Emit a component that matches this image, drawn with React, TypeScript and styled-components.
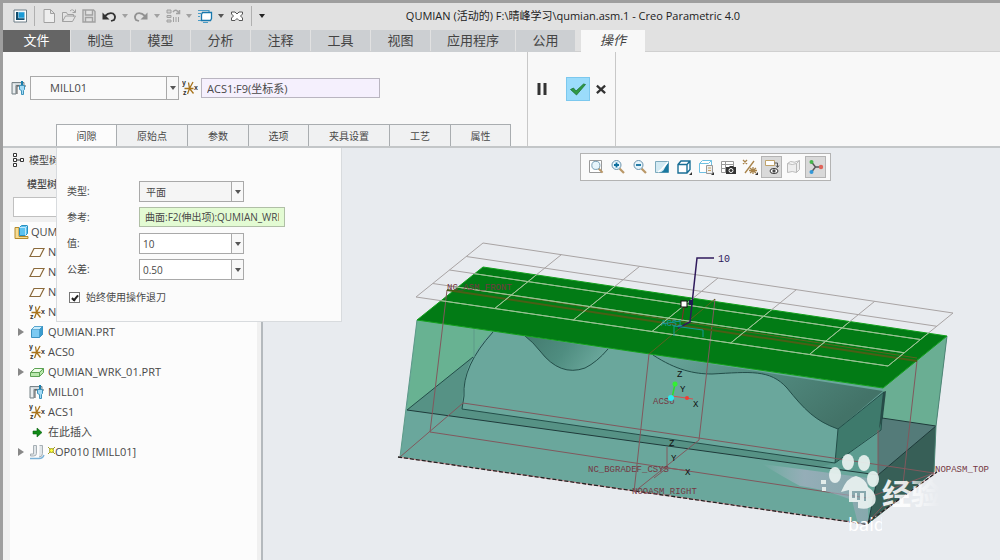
import React from "react";
import styled, { createGlobalStyle } from "styled-components";

const uiFont = `"Open Sans", "Noto Sans CJK SC", sans-serif`;

const GlobalStyle = createGlobalStyle`
  *, *::before, *::after { box-sizing: border-box; }
  body { margin: 0; background: #e8ebef; color: #484848; font: 11px/16px ${uiFont}; }
  button, input, select { font: inherit; color: inherit; margin: 0; }
  ul { list-style: none; margin: 0; padding: 0; }
  svg { display: block; flex: none; }
`;

const Window = styled.div`
  min-height: 100vh;
  display: flex;
  flex-direction: column;
  border: solid #9e9e9e;
  border-width: 3px 0 0 3px;
`;

const TitleBar = styled.header`
  height: 27px;
  display: flex;
  align-items: center;
  background: #e1e1e1;
  padding: 0 120px 2px 9px;
`;

const QuickTools = styled.div`
  display: flex;
  align-items: center;
  gap: 4px;
`;

const QuickButton = styled.button<{ $faded?: boolean }>`
  display: flex;
  align-items: center;
  padding: 0;
  border: 0;
  background: none;
  opacity: ${(p) => (p.$faded ? 0.45 : 1)};
`;

const Separator = styled.span`
  width: 1px;
  height: 20px;
  margin: 0 2px;
  background: #b0b0b0;
`;

const Title = styled.h1`
  flex: 1;
  margin: 0;
  text-align: center;
  font-size: 11px;
  font-weight: 400;
  color: #222;
  white-space: nowrap;
`;

const Ribbon = styled.nav`
  height: 22px;
  display: flex;
  gap: 1px;
  background: #e1e1e1;
  border-bottom: 1px solid #d0d0d0;
`;

const RibbonTab = styled.button<{ $kind?: "file" | "active"; $w: number }>`
  width: ${(p) => p.$w}px;
  height: 22px;
  padding: 0 0 2px;
  border: 0;
  font-size: 13px;
  line-height: 18px;
  margin-left: ${(p) => (p.$kind === "active" ? 5 : 0)}px;
  font-style: ${(p) => (p.$kind === "active" ? "italic" : "normal")};
  background: ${(p) => (p.$kind === "file" ? "#656565" : p.$kind === "active" ? "#f8f8f8" : "#cccfd2")};
  color: ${(p) => (p.$kind === "file" ? "#fff" : "#444")};
`;

const Dashboard = styled.section`
  height: 96px;
  display: flex;
  background: #f8f8f8;
  border-bottom: 2px solid #c3c6c8;
  position: relative;
  z-index: 2;
`;

const DashMain = styled.div`
  width: 525px;
  display: flex;
  flex-direction: column;
  justify-content: space-between;
  padding-top: 24px;
  border-right: 1px solid #c8c8c8;
`;

const DashFields = styled.div`
  display: flex;
  align-items: center;
  gap: 3px;
  padding-left: 8px;
`;

const Combo = styled.div<{ $w: number; $h?: number; $bg?: string }>`
  width: ${(p) => p.$w}px;
  height: ${(p) => p.$h ?? 21}px;
  display: flex;
  border: 1px solid #a9a9a9;
  background: ${(p) => p.$bg ?? "#fff"};
`;

const comboField = `
  flex: 1;
  min-width: 0;
  border: 0;
  outline: 0;
  background: none;
  appearance: none;
`;

const ComboSelect = styled.select<{ $pad: number }>`
  ${comboField}
  padding: 0 0 0 ${(p) => p.$pad}px;
`;

const ComboInput = styled.input`
  ${comboField}
  padding: 0 3px;
`;

const ComboArrow = styled.button`
  width: 12px;
  padding: 0;
  border: 0;
  border-left: 1px solid #a9a9a9;
  background: #f8f8f8;
  display: flex;
  align-items: center;
  justify-content: center;
  pointer-events: none;
`;

const Collector = styled.input<{ $w: number; $bg: string; $edge: string }>`
  width: ${(p) => p.$w}px;
  height: 20px;
  padding: 0 5px;
  border: 1px solid ${(p) => p.$edge};
  background: ${(p) => p.$bg};
`;

const DashActions = styled.div`
  width: 88px;
  display: flex;
  align-items: center;
  padding: 0 8px 20px;
  gap: 5px;
  border-right: 1px solid #c8c8c8;
`;

const ActionButton = styled.button<{ $on?: boolean }>`
  width: ${(p) => (p.$on ? 24 : 12)}px;
  height: 24px;
  padding: 0;
  display: flex;
  align-items: center;
  justify-content: center;
  border: ${(p) => (p.$on ? "1px solid #7cc8ee" : "0")};
  background: ${(p) => (p.$on ? "#9bdcfb" : "none")};
  &:first-child { margin-right: auto; }
`;

const PanelTabs = styled.div`
  position: relative;
  display: flex;
  margin-left: 53px;
`;

const PanelTab = styled.button<{ $w: number; $active?: boolean }>`
  width: ${(p) => p.$w}px;
  height: 22px;
  padding: 0;
  font-size: 10px;
  border: solid #a9adb0;
  border-width: 1px 1px 0 0;
  background: ${(p) => (p.$active ? "#fcfcfc" : "#f0f1f2")};
  &:first-child { border-left-width: 1px; }
`;

const ClearancePanel = styled.form`
  position: absolute;
  top: 100%;
  left: 0;
  width: 286px;
  height: 174px;
  margin-top: 2px;
  padding: 33px 10px 0;
  background: #fbfbfb;
  border: solid #d8dbde;
  border-width: 0 1px 1px;
  font-size: 10px;
`;

const FieldRow = styled.div`
  height: 26px;
  display: grid;
  grid-template-columns: 72px 1fr;
  align-items: start;
  line-height: 20px;
`;

const CheckRow = styled.label`
  display: flex;
  align-items: center;
  gap: 6px;
  padding: 4px 2px;
`;

const CheckBox = styled.input`
  appearance: none;
  width: 11px;
  height: 11px;
  border: 1px solid #777;
  background: #fff;
  display: grid;
  place-items: center;
  &:checked::after {
    content: "";
    width: 4px;
    height: 7px;
    border: solid #222;
    border-width: 0 2px 2px 0;
    transform: rotate(40deg);
  }
`;

const Workspace = styled.main`
  flex: 1;
  display: flex;
`;

const Sidebar = styled.aside`
  width: 260px;
  display: flex;
  flex-direction: column;
  background: #f0f0f0;
  border-right: 2px solid #b4b9bd;
  padding: 0 4px 0 7px;
`;

const SidebarTab = styled.div`
  display: flex;
  align-items: center;
  gap: 2px;
  height: 24px;
  padding-left: 1px;
  font-size: 10px;
  white-space: nowrap;
`;

const SidebarTitle = styled.h2`
  margin: 0;
  height: 25px;
  padding-left: 17px;
  font-size: 10px;
  line-height: 24px;
  font-weight: 500;
`;

const SearchBox = styled.input`
  margin: 0 20px 5px 3px;
  height: 20px;
  border: 1px solid #c0c0c0;
  background: #fff;
`;

const Tree = styled.ul`
  flex: 1;
  background: #fcfcfc;
`;

const TreeItem = styled.li<{ $root?: boolean }>`
  display: flex;
  align-items: center;
  height: 20px;
  padding-left: ${(p) => (p.$root ? 3 : 8)}px;
  gap: ${(p) => (p.$root ? 2 : 3)}px;
  white-space: nowrap;
`;

const Twist = styled.span`
  width: 8px;
  display: flex;
`;

const TreeName = styled.span`
  display: flex;
  align-items: center;
`;

const Viewport = styled.section`
  flex: 1;
  position: relative;
  min-width: 0;
  background: #e8ebef;
`;

const ViewBar = styled.div`
  position: absolute;
  z-index: 1;
  top: 5px;
  right: 169px;
  display: flex;
  gap: 1px;
  padding: 2px 4px;
  border: 1px solid #b3b3b3;
  background: #fafafa;
`;

const ViewButton = styled.button<{ $on?: boolean }>`
  width: 21px;
  height: 22px;
  padding: 0;
  display: flex;
  align-items: center;
  justify-content: center;
  border: 1px solid ${(p) => (p.$on ? "#b4b4b4" : "transparent")};
  background: ${(p) => (p.$on ? "#d9d9d9" : "none")};
`;

const Scene = styled.svg`
  width: 100%;
`;

/* ---------- icons ---------- */

const Icon = ({ size = 16, children }: { size?: number; children: React.ReactNode }) => (
  <svg width={size} height={size} viewBox="0 0 16 16" fill="none" stroke="#555" strokeWidth="1">
    {children}
  </svg>
);

const Caret = ({ color = "#555" }: { color?: string }) => (
  <svg width="8" height="4" viewBox="0 0 8 4"><path d="M1 0h6L4 4z" fill={color} /></svg>
);

const tiny = { fontSize: 7, fontFamily: "Liberation Sans, sans-serif", fontWeight: 700, stroke: "none", fill: "#333" };

const CsysIcon = () => (
  <Icon>
    <path d="M2.500 8.500h9M6.500 2.500l1 6 4 5M11 2l-3.500 6.500-2 5.500" stroke="#a8741c" strokeWidth="1.300" />
    <text x="0" y="5" {...tiny}>y</text>
    <text x="1" y="15" {...tiny}>z</text>
    <text x="12" y="10" {...tiny}>x</text>
  </Icon>
);

const MillIcon = () => (
  <Icon>
    <path d="M1 14V2.500h12v3H5V14z" fill="#d3dadd" stroke="#788489" />
    <path d="M3 4v9" stroke="#fff" />
    <path d="M6 6v8M6 6h9" stroke="#555" />
    <path d="M8.500 5.500h5v4l-1 1v4h-2v-4l-2-1z" fill="#a4dbf6" stroke="#3d93bb" />
    <path d="M11 1v4" stroke="#1b7fad" strokeWidth="2" />
  </Icon>
);

const PlaneIcon = () => (
  <Icon><path d="M5 4.500h10l-4 8H1z" fill="#fffdf8" stroke="#8b6a3c" strokeWidth="1.200" /></Icon>
);

const AssemblyIcon = () => (
  <Icon>
    <path d="M2 3.500h4v9h9v2H2z" fill="#f7dc94" stroke="#b58a2b" />
    <path d="M6.500 3.500l2-2h6v8l-2 2h-6z" fill="#5cc2ef" stroke="#2a8fc0" />
    <path d="M6.500 3.500h6v8M12.500 3.500l2-2" stroke="#bfe7fb" />
  </Icon>
);

const PartIcon = () => (
  <Icon>
    <path d="M2.500 5.500l3-3h8v8l-3 3h-8z" fill="#7ccaf2" stroke="#3c93c2" />
    <path d="M2.500 5.500l3-3h8l-3 3z" fill="#c9ecfc" stroke="#3c93c2" strokeWidth=".6" />
    <path d="M10.500 5.500v8l3-3v-8z" fill="#3a9ccf" stroke="#3c93c2" strokeWidth=".6" />
  </Icon>
);

const WorkpieceIcon = () => (
  <Icon>
    <path d="M1.500 8.500l4-4h9v4l-4 4h-9z" fill="#b9e8ac" stroke="#5da254" />
    <path d="M1.500 8.500h9l4-4M10.500 8.500v4" stroke="#5da254" />
    <path d="M3 8l3-3h7l-3 3z" fill="#effbea" stroke="none" />
  </Icon>
);

const InsertIcon = () => (
  <Icon><path d="M4 7h4V4l5 4.500L8 13v-3H4z" fill="#118a16" stroke="#0a5f10" strokeWidth=".6" /></Icon>
);

const OperationIcon = () => (
  <Icon>
    <path d="M4.500 1.500h3v8q0 2.500-3 2.500H1.500v-2h3zM10.500 1.500h3v8q0 3.500-3.500 3.500" fill="#e1e6e9" stroke="#a6afb5" />
    <path d="M1 14.500h9q4 0 5-3.500" stroke="#7bb2d8" strokeWidth="1.300" />
  </Icon>
);

const SparkIcon = () => (
  <svg width="7" height="12" viewBox="0 0 7 12" stroke="#a19e20">
    <path d="M0 1l7 7M7 1L0 8" />
    <circle cx="3.500" cy="4.500" r="2" fill="#ffff3c" />
  </svg>
);

const TreeTabIcon = () => (
  <Icon>
    <g stroke="#333" fill="#fff">
      <path d="M2.500 1.500h3v3h-3zM2.500 6.500h3v3h-3zM2.500 11.500h3v3h-3zM9.500 6.500h3v3h-3z" />
      <path d="M5.500 8h4" />
    </g>
  </Icon>
);

const AppIcon = () => (
  <Icon>
    <path d="M2 2h12.500v12H2z" fill="#fff" stroke="#6d7c86" />
    <path d="M4 4h8.500v8H4z" fill="#134d6d" stroke="none" />
    <path d="M6.500 4h6v6h-6z" fill="#199bd7" stroke="#bfe3f3" strokeWidth=".6" />
  </Icon>
);

const NewIcon = () => <Icon><path d="M3 1.500h6.500l4 4v9H3zM9.500 1.500v4h4" fill="#fff" /></Icon>;
const OpenIcon = () => (
  <Icon><path d="M1.500 13.500v-9h4l1 2h6v2M1.500 13.500l3-5.500h10l-3 5.500zM9 3q3-3 5 1.500M14.500 1.500v3h-3" fill="#e9e9e9" /></Icon>
);
const SaveIcon = () => (
  <Icon><path d="M2 2h10.500L14 3.500v10.500H2zM4.500 2v5h7V2M4.500 14V9.500h7V14" fill="#ddd" strokeWidth="1.400" /></Icon>
);
const UndoIcon = ({ flip }: { flip?: boolean }) => (
  <Icon>
    <g transform={flip ? "matrix(-1 0 0 1 16 0)" : undefined}>
      <path d="M4 8q4-4 8-2.500 3.500 2.500 1 6.500l-3 1" stroke="#333" strokeWidth="1.800" />
      <path d="M1.500 4.500v7h7z" fill="#333" stroke="none" />
    </g>
  </Icon>
);
const RegenIcon = () => (
  <Icon>
    <path d="M2 2h4v3H2zM2 7.500h4v2H2zM2 12h4v2H2zM8.500 9v5M11 9v5M13.500 9v5" fill="#bbb" />
    <path d="M8 4q3-4 6 1M14.500 2v3.500H11" strokeWidth="1.500" />
  </Icon>
);
const WindowsIcon = () => (
  <Icon>
    <path d="M1 2.500h11v2M1 5.500h3M1 12.500h3" stroke="#4c9cc6" strokeWidth="1.200" />
    <path d="M4.500 6.500l1-2h9v6l-1 2h-9z" fill="#fff" stroke="#1878ad" strokeWidth="1.300" />
    <path d="M1 8.500h2M6 14.500h5" stroke="#4c9cc6" />
  </Icon>
);
const CloseIcon = () => (
  <Icon><path d="M2.500 4h3.500l2 2 2-2h3.500v2L11.500 8l2 2v2.500H10L8 10.500l-2 2H2.500V10l2-2-2-2z" fill="#fff" stroke="#555" /></Icon>
);

const Lens = ({ sign }: { sign?: string }) => (
  <>
    <path d="M9.500 9.500l4.500 4.500" stroke="#b99767" strokeWidth="2.200" />
    <circle cx="6.500" cy="6" r="4.500" fill="#e7f5fc" stroke="#6b94ad" />
    {sign && <path d={sign} stroke="#0f6f9f" strokeWidth="1.800" />}
  </>
);

const CubeOutline = () => (
  <path d="M2 5.500l3-3.500h9v8.500l-3 3.500H2zM2 5.500h9V14M11 5.500L14 2" fill="#fff" stroke="#1a6f96" strokeWidth="1.400" />
);

const Corner = () => <path d="M16 13v3h-3z" fill="#333" stroke="none" />;

const viewTools: { label: string; on?: boolean; art: React.ReactNode }[] = [
  { label: "重新调整", art: <><path d="M1.500 1.500h12v12h-12z" fill="#fff" stroke="#999" /><g transform="translate(2 1) scale(.9)"><Lens /></g></> },
  { label: "放大", art: <Lens sign="M4 6h5M6.500 3.500v5" /> },
  { label: "缩小", art: <Lens sign="M4 6h5" /> },
  { label: "重画", art: <><path d="M1.500 2.500h13v11h-13z" fill="#d3eaf3" stroke="#7daabd" /><path d="M14.500 2.500v11h-9q4-1 5-4z" fill="#19789f" stroke="none" /><path d="M14 3L8 10l-4 3" stroke="#fff" strokeWidth="1.500" /></> },
  { label: "显示样式", art: <><CubeOutline /><Corner /></> },
  { label: "已保存方向", art: <><path d="M1.500 4.500l3-3h9v8l-3 4h-9z" fill="#fff" stroke="#6fc0e2" /><path d="M1.500 4.500h9l3-3" stroke="#6fc0e2" /><path d="M8.500 6.500h6v8h-6z" fill="#eee" stroke="#999" /><path d="M10 9h3M10 11.500h3" stroke="#c8a15f" /><Corner /></> },
  { label: "视图管理器", art: <><path d="M1.500 2.500h12v11h-12zM1.500 5.500h12M1.500 9.500h12M5.500 2.500v11" fill="#fff" stroke="#999" /><path d="M6 8h3l1-1h3l1 1h2v7H6z" fill="#333" stroke="none" /><circle cx="11" cy="11.500" r="2" stroke="#fff" /></> },
  { label: "基准显示", art: <><path d="M1 1l4 4M5 1L1 5M12 2L3 14M8 9l6 5M8 14l6-5M11 8v7M7 11.500h8" stroke="#a8834a" strokeWidth="1.300" /><Corner /></> },
  { label: "注释显示", on: true, art: <><path d="M1.500 1.500h9v5h-9z" fill="#fff" stroke="#c0a36a" /><path d="M10.500 4h3v4M12 6.500l1.500 2 1.500-2" /><ellipse cx="10" cy="12" rx="4" ry="2.500" fill="#fff" stroke="#333" /><circle cx="10" cy="12" r="1.200" fill="#333" /></> },
  { label: "模拟", art: <path d="M1.500 4.500l3-2q4 2 9-1v9l-3 3q-4-2-9 0zM10.500 4.500v9M1.500 4.500q5 2 9 0l3-3" fill="#eee" stroke="#bbb" /> },
  { label: "旋转中心", on: true, art: <><path d="M3.500 3l4 5-4 5M7.500 8H13" stroke="#555" strokeWidth="1.400" /><circle cx="3.500" cy="3" r="2" fill="#45b54b" stroke="none" /><circle cx="3.500" cy="13" r="2" fill="#3398d8" stroke="none" /><circle cx="13" cy="8" r="2.200" fill="#e0645a" stroke="none" /></> },
];

/* ---------- 3D scene ---------- */

type Pt = [number, number];
const mix = (a: Pt, b: Pt, t: number): Pt => [a[0] + (b[0] - a[0]) * t, a[1] + (b[1] - a[1]) * t];
const seg = (a: Pt, b: Pt) => `M${a[0]} ${a[1]}L${b[0]} ${b[1]}`;

const gridBackLeft: Pt = [483, 243];
const gridBackRight: Pt = [953, 313];
const gridFrontLeft: Pt = [416, 297];
const gridFrontRight: Pt = [888, 366];

const gridPath = [
  ...[0, 1, 2, 3, 4].map((i) =>
    seg(mix(gridBackLeft, gridFrontLeft, i / 4), mix(gridBackRight, gridFrontRight, i / 4))),
  ...[0, 1, 2, 3, 4, 5, 6].map((i) =>
    seg(mix(gridBackLeft, gridBackRight, i / 6), mix(gridFrontLeft, gridFrontRight, i / 6))),
].join("");

const topFace = "M483 267L947 336L883 388L417 320Z";

const datumLabels: [number, number, string, string?][] = [
  [447, 290, "NC_ASM_FRONT"],
  [588, 472, "NC_BGRADEF_CSYS"],
  [632, 494, "NOOASM_RIGHT"],
  [935, 472, "NOPASM_TOP"],
  [653, 404, "ACS0"],
  [661, 326, "ACS1", "#149a9a"],
];

const axisLabels: [number, number, string][] = [
  [677, 377, "Z"], [680, 392, "Y"], [693, 407, "X"],
  [669, 446, "Z"], [671, 461, "Y"], [685, 475, "X"],
];

const Model = () => (
  <Scene viewBox="263 148 737 412" role="img" aria-label="QUMIAN 制造模型">
    <defs>
      <linearGradient id="dip" x1="0" y1="0" x2="1" y2="0.300">
        <stop offset="0" stopColor="#437a6e" /><stop offset=".55" stopColor="#4f8d80" /><stop offset="1" stopColor="#69a69a" />
      </linearGradient>
      <linearGradient id="slope" x1="0" y1="0" x2="1" y2="0.400">
        <stop offset="0" stopColor="#6aa79c" /><stop offset=".5" stopColor="#528b80" /><stop offset="1" stopColor="#437368" />
      </linearGradient>
      <linearGradient id="haze" x1="0" y1="0" x2="1" y2="0">
        <stop offset="0" stopColor="#b4bccd" stopOpacity="0" /><stop offset=".4" stopColor="#a7b0c3" stopOpacity=".7" /><stop offset="1" stopColor="#9aaab8" stopOpacity=".6" />
      </linearGradient>
      <linearGradient id="fadeOut" x1="0" y1="0" x2="1" y2="0">
        <stop offset="0" stopColor="#fff" stopOpacity=".9" /><stop offset=".45" stopColor="#fff" stopOpacity=".85" /><stop offset="1" stopColor="#fff" stopOpacity="0" />
      </linearGradient>
      <clipPath id="brandLine"><rect x="840" y="513" width="42" height="30" /></clipPath>
      <clipPath id="onTop"><path d={topFace} /></clipPath>
    </defs>

    <path d="M417 320L883 388L947 336L936 426L934 472L868 524L400 457Z" fill="#6aa79c" />
    <path d="M417 320L493 331Q478 345 473 357L407 410Z" fill="#68b292" />
    <path d="M883 388L947 336L936 426L882 418Z" fill="#6aae93" />
    <path d="M407 410L473 357Q463 372 462 409L835 463L878 430L882 418L936 426L878 475Z" fill="#569285" />
    <path d="M835 463L878 430V475L820 467Z" fill="#5d9d91" />
    <path d="M878 418L936 426L878 475Z" fill="#547b79" />
    <path d="M878 475L936 426L934 472L868 524Z" fill="#375f57" />
    <path d="M525 336Q533 342 540 351Q560 377 585 368Q597 362 608 349Z" fill="url(#dip)" />
    <path d="M653 355C676 370 694 374 712 374C750 372 770 369 787 388C804 409 815 421 838 429L883 391Z" fill="url(#slope)" />
    <path d="M838 429L884 392L881 429L835 463Z" fill="#3e7a6c" />
    <path d="M883 392L886 391L883 417L879 429Z" fill="#294b47" />

    <g fill="none" stroke="#234e49" strokeWidth="1">
      <path d="M407 410L473 357M493 332Q462 366 464 396L462 409L835 463L838 429L884 392L881 430L835 463" />
      <path d="M407 410L878 475L936 426L882 418M878 475L868 524" stroke="#1f3a3a" />
      <path d="M525 336Q533 342 540 351Q560 377 585 368Q597 362 608 349M653 355C676 370 694 374 712 374C750 372 770 369 787 388C804 409 815 421 838 429" />
      <path d="M417 320L400 457" stroke="#5c9a88" />
      <path d="M474 329V357" stroke="#5c9a88" />
      <path d="M947 336L936 426L934 472" stroke="#4f8576" />
    </g>

    <path d={topFace} fill="#027b15" stroke="#12a01c" />

    <g fill="none" stroke="#81585d" strokeWidth="1">
      <path d="M447 290L430 432L867 498L934 473L463 403L400 457M649 354L634 492L699 440L715 299M917 361L903 484L868 522M878 430V475" />
      <path d="M447 290L917 361" stroke="#4a5e16" strokeWidth="2" />
      <path d="M450 286L917 358M649 354L715 299" stroke="#5d611f" />
      <path d="M667 468V447M667 468L690 471M667 468L654 478" />
    </g>
    <path d={gridPath} fill="none" stroke="#a8a3a3" strokeWidth="1" />
    <path d={gridPath} fill="none" stroke="#93cb8d" strokeWidth="1" clipPath="url(#onTop)" />

    <path d="M398 457L865 524L937 472" fill="none" stroke="#c88c90" />
    <path d="M398 457L865 524L937 472" fill="none" stroke="#222" strokeWidth="1.300" strokeDasharray="4 2" />

    <path d="M714 258H697L690 322L678 328" fill="none" stroke="#2f1a5c" strokeWidth="1.500" />
    <path d="M662 324L680 321M674 336V326L703 330V337" fill="none" stroke="#149a9a" />
    <path d="M684 307L682 320" stroke="#8a2a2a" />
    <rect x="681" y="301" width="6" height="6" fill="#fff" stroke="#111" />
    <rect x="689" y="300" width="4" height="5" fill="#1e1a50" />

    <path d="M675 384L672 398" stroke="#2bdc2b" strokeWidth="1.500" />
    <path d="M672 396L693 399" stroke="#d65050" />
    <circle cx="675" cy="384" r="2.500" fill="#33f033" />
    <circle cx="687" cy="398" r="2" fill="#f23c34" />

    <g fontFamily="Liberation Mono, monospace" fontSize="9">
      {datumLabels.map(([x, y, label, color]) => (
        <text key={label} x={x} y={y} fill={color ?? "#743843"}>{label}</text>
      ))}
      <g fill="#111" fontSize="9">
        {axisLabels.map(([x, y, label]) => <text key={`${label}${y}`} x={x} y={y}>{label}</text>)}
      </g>
      <text x="718" y="262" fontSize="10" fill="#2f1a5c">10</text>
    </g>
    <circle cx="671" cy="398" r="3" fill="#2deaf0" />

    <path d="M762 464L868 478V524H858L852 500Q820 488 800 486Q785 478 762 464Z" fill="url(#haze)" />
    <g fill="#e9f2f0" fillOpacity=".92">
      <ellipse cx="848" cy="462" rx="6" ry="8" />
      <ellipse cx="864" cy="463" rx="6" ry="8" />
      <ellipse cx="835" cy="475" rx="6" ry="8" />
      <ellipse cx="873" cy="479" rx="6" ry="8" />
      <path fillRule="evenodd" d="M856 476Q865 478 868 487Q878 494 875 503Q869 511 858 508V502H849V490L841 492Q847 477 856 476ZM852 491V498H855V493H857V500H860V493H864V501H866V491Z" />
      <path d="M821 480h5v4h-5zM822 487h4v4h-4z" />
    </g>
    <g fontFamily="Noto Sans CJK SC, sans-serif" fontWeight="700">
      <text x="882" y="505" fontSize="29" fill="url(#fadeOut)">经验</text>
      <text x="848" y="531" fontSize="18" fontFamily="Noto Sans, sans-serif" fontWeight="400" fill="#fff" clipPath="url(#brandLine)">baidu</text>
    </g>
  </Scene>
);

/* ---------- page ---------- */

const ribbonTabs: [string, number, ("file" | "active")?][] = [
  ["文件", 67, "file"], ["制造", 59], ["模型", 59], ["分析", 59], ["注释", 59], ["工具", 59],
  ["视图", 59], ["应用程序", 84], ["公用", 59], ["操作", 64, "active"],
];

const panelTabs: [string, number][] = [
  ["间隙", 61], ["原始点", 71], ["参数", 61], ["选项", 60], ["夹具设置", 81], ["工艺", 61], ["属性", 60],
];

const treeRows: { icon: React.ReactNode; name: string; open?: boolean; spark?: boolean }[] = [
  { icon: <PlaneIcon />, name: "NC_ASM_RIGHT" },
  { icon: <PlaneIcon />, name: "NC_ASM_TOP" },
  { icon: <PlaneIcon />, name: "NC_ASM_FRONT" },
  { icon: <CsysIcon />, name: "NC_ASM_DEF_CSYS" },
  { icon: <PartIcon />, name: "QUMIAN.PRT", open: true },
  { icon: <CsysIcon />, name: "ACS0" },
  { icon: <WorkpieceIcon />, name: "QUMIAN_WRK_01.PRT", open: true },
  { icon: <MillIcon />, name: "MILL01" },
  { icon: <CsysIcon />, name: "ACS1" },
  { icon: <InsertIcon />, name: "在此插入" },
  { icon: <OperationIcon />, name: "OP010 [MILL01]", open: true, spark: true },
];

const ValueCombo = ({ id, value }: { id: string; value: string }) => (
  <Combo $w={105}>
    <ComboInput id={id} defaultValue={value} />
    <ComboArrow type="button" aria-label="展开"><Caret /></ComboArrow>
  </Combo>
);

export default function App() {
  return (
    <Window>
      <GlobalStyle />
      <TitleBar>
        <QuickTools>
          <QuickButton aria-label="Creo"><AppIcon /></QuickButton>
          <Separator />
          <QuickButton $faded aria-label="新建"><NewIcon /></QuickButton>
          <QuickButton $faded aria-label="打开"><OpenIcon /></QuickButton>
          <QuickButton $faded aria-label="保存"><SaveIcon /></QuickButton>
          <QuickButton aria-label="撤消"><UndoIcon /></QuickButton>
          <QuickButton $faded aria-label="撤消列表"><Caret /></QuickButton>
          <QuickButton $faded aria-label="重做"><UndoIcon flip /></QuickButton>
          <QuickButton $faded aria-label="重做列表"><Caret /></QuickButton>
          <QuickButton $faded aria-label="重新生成"><RegenIcon /></QuickButton>
          <QuickButton $faded aria-label="重新生成列表"><Caret /></QuickButton>
          <QuickButton aria-label="窗口"><WindowsIcon /></QuickButton>
          <QuickButton aria-label="窗口列表"><Caret /></QuickButton>
          <QuickButton aria-label="关闭"><CloseIcon /></QuickButton>
          <Separator />
          <QuickButton aria-label="自定义"><Caret color="#222" /></QuickButton>
        </QuickTools>
        <Title>QUMIAN (活动的) F:\晴峰学习\qumian.asm.1 - Creo Parametric 4.0</Title>
      </TitleBar>

      <Ribbon>
        {ribbonTabs.map(([name, w, kind]) => (
          <RibbonTab key={name} $w={w} $kind={kind}>{name}</RibbonTab>
        ))}
      </Ribbon>

      <Dashboard>
        <DashMain>
          <DashFields>
            <MillIcon />
            <Combo $w={149} $h={24} $bg="#fafafa">
              <ComboSelect $pad={19} aria-label="加工中心"><option>MILL01</option></ComboSelect>
              <ComboArrow type="button" aria-label="展开"><Caret /></ComboArrow>
            </Combo>
            <CsysIcon />
            <Collector $w={179} $bg="#f5f0fd" $edge="#b9b5c0" aria-label="坐标系" readOnly value="ACS1:F9(坐标系)" />
          </DashFields>
          <PanelTabs>
            {panelTabs.map(([name, w], i) => (
              <PanelTab key={name} $w={w} $active={i === 0}>{name}</PanelTab>
            ))}
            <ClearancePanel>
              <FieldRow>
                <label htmlFor="type">类型:</label>
                <Combo $w={105} $bg="#f5f5f5">
                  <ComboSelect id="type" $pad={6}><option>平面</option></ComboSelect>
                  <ComboArrow type="button" aria-label="展开"><Caret /></ComboArrow>
                </Combo>
              </FieldRow>
              <FieldRow>
                <label htmlFor="ref">参考:</label>
                <Collector id="ref" $w={146} $bg="#e3fbd3" $edge="#b0bfa6" readOnly value="曲面:F2(伸出项):QUMIAN_WRK_01" />
              </FieldRow>
              <FieldRow>
                <label htmlFor="value">值:</label>
                <ValueCombo id="value" value="10" />
              </FieldRow>
              <FieldRow>
                <label htmlFor="tolerance">公差:</label>
                <ValueCombo id="tolerance" value="0.50" />
              </FieldRow>
              <CheckRow><CheckBox type="checkbox" defaultChecked />始终使用操作退刀</CheckRow>
            </ClearancePanel>
          </PanelTabs>
        </DashMain>
        <DashActions>
          <ActionButton aria-label="暂停"><Icon><path d="M5 2v12M11 2v12" stroke="#333" strokeWidth="3" /></Icon></ActionButton>
          <ActionButton $on aria-label="确定">
            <svg width="18" height="16" viewBox="0 0 18 16"><path d="M1.500 8.500l3-1.500 2.500 3 7.500-7 2 .5L7.500 14z" fill="#2f9a45" stroke="#176b2c" strokeWidth=".7" /></svg>
          </ActionButton>
          <ActionButton aria-label="取消"><Icon size={12}><path d="M2.500 3.500l11 10M13.500 3.500l-11 10" stroke="#333" strokeWidth="3" /></Icon></ActionButton>
        </DashActions>
      </Dashboard>

      <Workspace>
        <Sidebar>
          <SidebarTab><TreeTabIcon />模型树</SidebarTab>
          <SidebarTitle>模型树</SidebarTitle>
          <SearchBox aria-label="搜索" />
          <Tree>
            <TreeItem $root><AssemblyIcon />QUMIAN.ASM</TreeItem>
            {treeRows.map((row) => (
              <TreeItem key={row.name}>
                <Twist>
                  {row.open && <svg width="6" height="8" viewBox="0 0 6 8"><path d="M0 0l6 4-6 4z" fill="#888" /></svg>}
                </Twist>
                {row.icon}
                <TreeName>{row.spark && <SparkIcon />}{row.name}</TreeName>
              </TreeItem>
            ))}
          </Tree>
        </Sidebar>
        <Viewport>
          <ViewBar>
            {viewTools.map((t) => (
              <ViewButton key={t.label} $on={t.on} aria-label={t.label}><Icon>{t.art}</Icon></ViewButton>
            ))}
          </ViewBar>
          <Model />
        </Viewport>
      </Workspace>
    </Window>
  );
}
